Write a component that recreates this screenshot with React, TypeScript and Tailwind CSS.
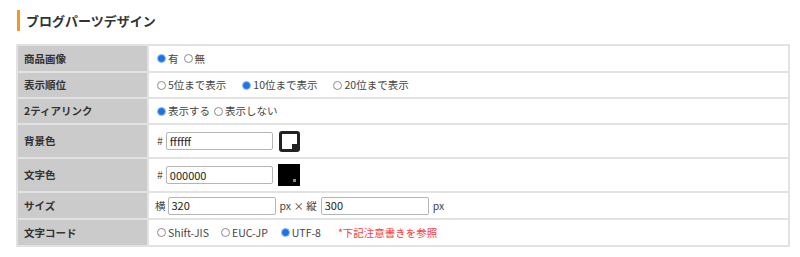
import React from "react";

const font = { fontFamily: '"Noto Sans CJK JP", "Noto Sans", sans-serif' };

// ラジオボタン（小さめの丸）
const Radio = ({ checked, label, className = "" }: { checked?: boolean; label: string; className?: string }) => (
  <span className={`inline-flex items-center ${className}`}>
    {checked ? (
      <span className="w-[9px] h-[9px] rounded-full border border-[#9cc0f5] bg-[#1a73e8] mr-[2px] box-border" />
    ) : (
      <span className="w-[9px] h-[9px] rounded-full border border-[#8a8a8a] bg-white mr-[2px] box-border" />
    )}
    <span>{label}</span>
  </span>
);

const Swatch = ({ dark }: { dark?: boolean }) =>
  dark ? (
    <span className="relative inline-block w-[22px] h-[22px] bg-black ml-[5px]">
      <span className="absolute right-[4px] bottom-[4px] w-[3px] h-[3px] bg-[#888]" />
    </span>
  ) : (
    <span className="relative inline-block w-[21px] h-[21px] rounded-[3px] border-[3px] border-[#222] bg-white ml-[6px] box-border">
      <span className="absolute right-0 bottom-0 w-[5px] h-[5px] bg-[#222]" />
    </span>
  );

const Field = ({ value, w = "w-[108px]" }: { value: string; w?: string }) => (
  <span className={`inline-flex items-center ${w} h-[18px] border border-[#b5b5b5] rounded-[2px] px-[3px] text-[11px] text-[#222] bg-white box-border`}>
    {value}
  </span>
);

const rows: { label: string; h: string; content: React.ReactNode }[] = [
  {
    label: "商品画像",
    h: "h-[27px]",
    content: (
      <div className="flex items-center">
        <Radio checked label="有" className="mr-[5px]" />
        <Radio label="無" />
      </div>
    ),
  },
  {
    label: "表示順位",
    h: "h-[26px]",
    content: (
      <div className="flex items-center">
        <Radio label="5位まで表示" className="mr-[16px]" />
        <Radio checked label="10位まで表示" className="mr-[16px]" />
        <Radio label="20位まで表示" />
      </div>
    ),
  },
  {
    label: "2ティアリンク",
    h: "h-[26px]",
    content: (
      <div className="flex items-center">
        <Radio checked label="表示する" className="mr-[4px]" />
        <Radio label="表示しない" />
      </div>
    ),
  },
  {
    label: "背景色",
    h: "h-[34px]",
    content: (
      <div className="flex items-center">
        <span className="mr-[3px] text-[#555]">#</span>
        <Field value="ffffff" w="w-[107px]" />
        <Swatch />
      </div>
    ),
  },
  {
    label: "文字色",
    h: "h-[34px]",
    content: (
      <div className="flex items-center">
        <span className="mr-[3px] text-[#555]">#</span>
        <Field value="000000" w="w-[107px]" />
        <Swatch dark />
      </div>
    ),
  },
  {
    label: "サイズ",
    h: "h-[27px]",
    content: (
      <div className="flex items-center">
        <span className="ml-[-2px] mr-[2px]">横</span>
        <Field value="320" />
        <span className="mx-[4px]">px × 縦</span>
        <Field value="300" />
        <span className="ml-[4px]">px</span>
      </div>
    ),
  },
  {
    label: "文字コード",
    h: "h-[27px]",
    content: (
      <div className="flex items-center">
        <Radio label="Shift-JIS" className="mr-[12px]" />
        <Radio label="EUC-JP" className="mr-[13px]" />
        <Radio checked label="UTF-8" className="mr-[17px]" />
        <span className="text-[#ff3b3b]">*下記注意書きを参照</span>
      </div>
    ),
  },
];

export default function App() {
  return (
    <div className="w-[800px] h-[257px] bg-white text-[#333]" style={font}>
      <div className="pt-[10px] pl-[17px] flex items-center">
        <span className="w-[3px] h-[21px] bg-[#f39a1e]" />
        <h2 className="ml-[6px] text-[13px] font-bold text-[#333] leading-[21px]">ブログパーツデザイン</h2>
      </div>
      <table className="mt-[13px] ml-[16px] w-[774px] border-collapse text-[10.5px]">
        <tbody>
          {rows.map((r) => (
            <tr key={r.label} className={r.h}>
              <th className="w-[131px] bg-[#cbcbcb] border-2 border-[#e2e2e2] text-left font-bold pl-[6px] text-[#333]">
                {r.label}
              </th>
              <td className="border-2 border-[#e2e2e2] pl-[8px] text-[#444]">{r.content}</td>
            </tr>
          ))}
        </tbody>
      </table>
    </div>
  );
}
